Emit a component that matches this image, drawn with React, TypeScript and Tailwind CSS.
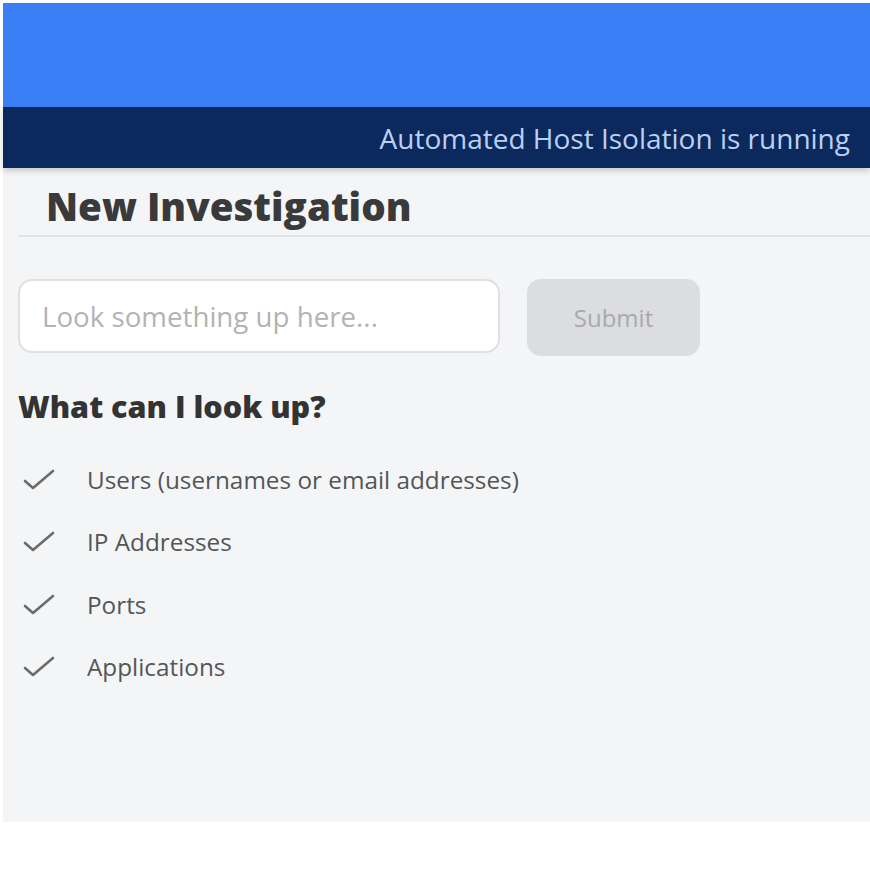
import { ReactElement } from "react";

const lookupItems: string[] = [
  "Users (usernames or email addresses)",
  "IP Addresses",
  "Ports",
  "Applications",
];

function CheckMark(): ReactElement {
  return (
    <svg width="34" height="24" viewBox="0 0 34 24" fill="none" className="shrink-0">
      <polyline points="3,13 11,20 31,3" stroke="#6b6b6b" strokeWidth="2.6" strokeLinecap="round" strokeLinejoin="round" />
    </svg>
  );
}

export default function App(): ReactElement {
  return (
    <div className="w-[870px] h-[870px] bg-white pl-[3px] pt-[3px] font-['Open_Sans',sans-serif]">
      <div className="w-[867px] h-[819px] bg-[#f4f5f7] flex flex-col">
        <div className="h-[104px] bg-[#3b7ff6]" />
        <div className="relative z-10 h-[61px] bg-[#0b295d] flex items-center justify-end pr-[20px] shadow-[0_3px_6px_rgba(0,0,0,0.18)]">
          <span className="text-[28px] text-[#bccff5]">Automated Host Isolation is running</span>
        </div>

        <div className="pl-[15px] flex flex-col">
          <div className="h-[69px] border-b-2 border-[#e2e3e6] flex items-center pl-[28px] pt-[9px]">
            <h1 className="font-extrabold text-[38.5px] text-[#3a3a3a] leading-none">New Investigation</h1>
          </div>

          <div className="mt-[42px] flex items-start gap-[27px]">
            <input
              className="w-[482px] h-[74px] bg-white border-2 border-[#e0e0e2] rounded-[14px] px-[22px] text-[27.7px] text-[#444] placeholder:text-[#b3b3b3] outline-none"
              placeholder="Look something up here..."
            />
            <button className="w-[173px] h-[77px] bg-[#dcdde0] rounded-[14px] text-[24px] text-[#a9a9ab]">Submit</button>
          </div>

          <h2 className="mt-[35px] font-extrabold text-[30.5px] text-[#333] leading-none">What can I look up?</h2>

          <ul className="mt-[27px] flex flex-col">
            {lookupItems.map((item: string) => (
              <li key={item} className="h-[62.5px] flex items-center gap-[31px] pl-[4px]">
                <CheckMark />
                <span className="text-[24.3px] text-[#555]">{item}</span>
              </li>
            ))}
          </ul>
        </div>
      </div>
    </div>
  );
}
